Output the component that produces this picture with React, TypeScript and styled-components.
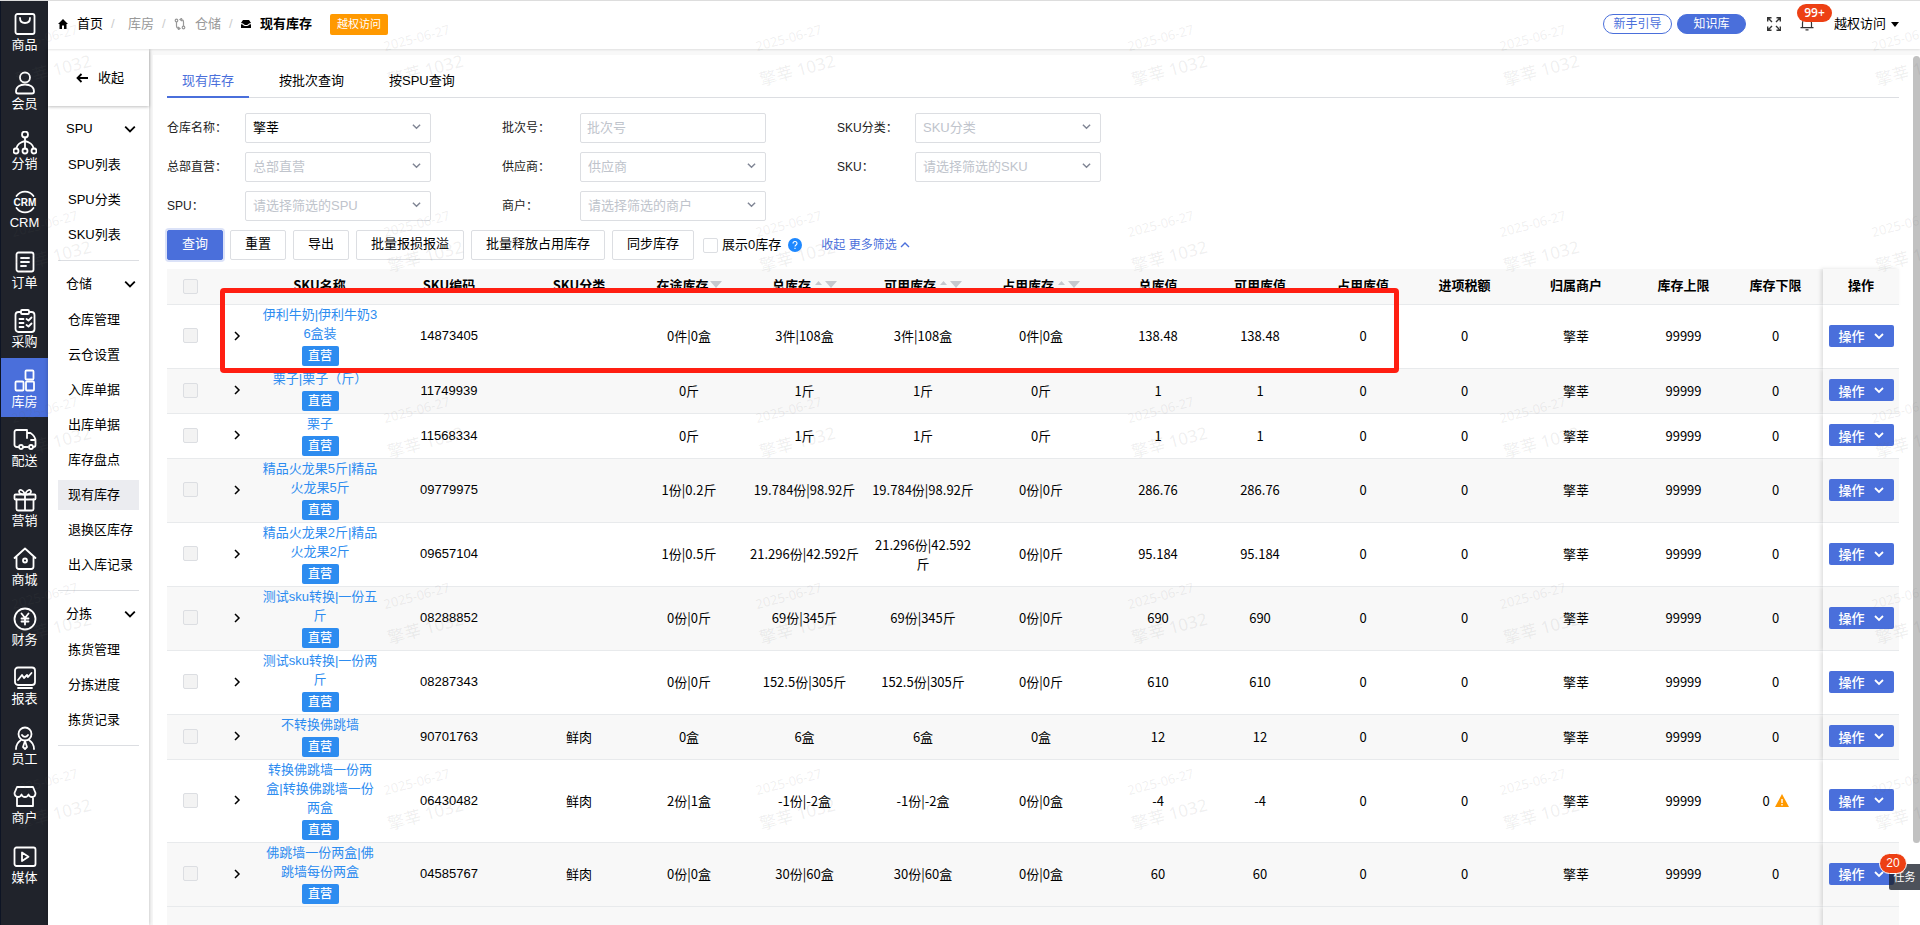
import React from 'react';
import styled, { createGlobalStyle, css } from 'styled-components';

const BLUE = '#4a6fdb';
const LINK = '#2d8cf0';
const LINE = '#dcdee2';
const SANS = '"Liberation Sans", "Noto Sans CJK SC", sans-serif';
const CJK = '"Noto Sans CJK SC", sans-serif';

const GlobalStyle = createGlobalStyle`
  * { box-sizing: border-box; }
  body {
    margin: 0;
    background: #f8f8f8;
    color: #000;
    font: 13px/20px ${SANS};
    overflow: hidden;
  }
  button, input, select { font: inherit; color: inherit; margin: 0; }
  a { text-decoration: none; color: inherit; }
  svg { display: block; flex: none; }
`;

/* ---------- shell ---------- */

const Shell = styled.div`
  position: relative;
  display: grid;
  grid-template-columns: 48px minmax(0, 1fr);
  height: 100vh;
  border-top: 1px solid #dddddd;
  overflow: hidden;
`;

const Rail = styled.nav`
  display: flex;
  flex-direction: column;
  padding-bottom: 32px;
  background: #20232b;
  border-left: 1px solid #0d1424;
`;

const RailLink = styled.a<{ $active?: boolean }>`
  flex: 1;
  display: flex;
  flex-direction: column;
  align-items: center;
  padding-top: 11px;
  color: #fff;
  line-height: 17px;
  background: ${(p) => (p.$active ? BLUE : 'transparent')};
`;

const Workspace = styled.div`
  display: flex;
  flex-direction: column;
  min-width: 0;
  min-height: 0;
`;

const Body = styled.div`
  flex: 1;
  display: flex;
  min-height: 0;
`;

/* ---------- top bar ---------- */

const TopBar = styled.header`
  position: relative;
  display: flex;
  align-items: center;
  justify-content: space-between;
  height: 48px;
  padding: 0 21px 2px 10px;
  background: #fff;
  box-shadow: 0 1px 2px rgba(0, 0, 0, 0.1);
`;

const Crumbs = styled.nav`
  display: flex;
  align-items: center;
`;

const Crumb = styled.a<{ $muted?: boolean; $current?: boolean }>`
  display: flex;
  align-items: center;
  gap: 9px;
  color: ${(p) => (p.$muted ? '#999' : '#000')};
  font-weight: ${(p) => (p.$current ? 700 : 400)};
`;

const Slash = styled.span`
  width: 20px;
  padding-left: 8px;
  color: #ccc;
`;

const Spacer = styled.span`
  width: 5px;
`;

const Tag = styled.span<{ $tone?: 'orange' }>`
  display: inline-block;
  height: ${(p) => (p.$tone ? 21 : 20)}px;
  padding: 0 7px;
  border-radius: 2px;
  background: ${(p) => (p.$tone ? '#ff9900' : LINK)};
  color: #fff;
  font-size: ${(p) => (p.$tone ? 11 : 12)}px;
  line-height: 20px;
`;

const CrumbTag = styled(Tag)`
  margin-left: 18px;
`;

const Tools = styled.div`
  display: flex;
  align-items: center;
`;

const Pill = styled.button<{ $filled?: boolean }>`
  width: 69px;
  height: 20px;
  margin-right: 5px;
  padding: 0;
  border: 1px solid ${BLUE};
  border-radius: 10px;
  background: ${(p) => (p.$filled ? BLUE : '#fff')};
  color: ${(p) => (p.$filled ? '#fff' : BLUE)};
  font-size: 12px;
  line-height: 18px;
`;

const IconButton = styled.button`
  position: relative;
  padding: 0;
  border: 0;
  background: none;
  margin-left: 16px;
`;

const Bell = styled(IconButton)`
  margin-left: 19px;
  margin-right: 20px;
`;

const badge = css`
  position: absolute;
  border-radius: 10px;
  background: #ed4014;
  color: #fff;
  text-align: center;
  font-size: 12px;
`;

const BellBadge = styled.span`
  ${badge}
  left: -3px;
  bottom: 9px;
  width: 35px;
  height: 18px;
  line-height: 18px;
  font-family: 'Open Sans', sans-serif;
  font-weight: 600;
`;

const UserButton = styled.button`
  display: flex;
  align-items: center;
  gap: 5px;
  padding: 0;
  border: 0;
  background: none;
`;

/* ---------- side menu ---------- */

const Side = styled.aside`
  width: 101px;
  background: #fff;
  box-shadow: 0 0 4px rgba(0, 0, 0, 0.25);
`;

const Collapse = styled.button`
  display: flex;
  align-items: center;
  justify-content: center;
  gap: 10px;
  width: 100%;
  height: 57px;
  padding: 0 0 0 3px;
  border: 0;
  background: #fff;
  box-shadow: 0 1px 3px rgba(0, 0, 0, 0.25);
`;

const Group = styled.section`
  margin: 0 10px;
  padding: 8px 0 10px;
  border-bottom: 1px solid ${LINE};
`;

const GroupHead = styled.button`
  display: flex;
  align-items: center;
  justify-content: space-between;
  width: 100%;
  height: 30px;
  margin-bottom: 6px;
  padding: 0 3px 0 8px;
  border: 0;
  background: none;
`;

const GroupList = styled.div`
  display: flex;
  flex-direction: column;
  gap: 5px;
`;

const SideLink = styled.a<{ $active?: boolean }>`
  height: 30px;
  padding-left: 10px;
  line-height: 30px;
  white-space: nowrap;
  background: ${(p) => (p.$active ? '#ebecf0' : 'transparent')};
`;

/* ---------- main panel ---------- */

const Panel = styled.main`
  flex: 1;
  min-width: 0;
  margin: 6px 0 0 4px;
  padding: 11px 21px 0 14px;
  background: #fff;
`;

const Tabs = styled.div`
  display: flex;
  gap: 15px;
  height: 32px;
  border-bottom: 1px solid ${LINE};
`;

const Tab = styled.button<{ $active?: boolean }>`
  height: 32px;
  padding: 0 15px;
  border: 0;
  border-bottom: 2px solid ${(p) => (p.$active ? BLUE : 'transparent')};
  background: none;
  color: ${(p) => (p.$active ? BLUE : '#000')};
`;

const Filters = styled.form`
  display: grid;
  grid-template-columns: repeat(3, 264px);
  gap: 9px 71px;
  margin-top: 15px;
`;

const Field = styled.label`
  display: grid;
  grid-template-columns: 78px 1fr;
  align-items: center;
  font-size: 12px;
  color: #222;
`;

const Control = styled.span`
  position: relative;
  display: block;
`;

const control = css`
  display: block;
  width: 100%;
  height: 30px;
  border: 1px solid ${LINE};
  border-radius: 2px;
  background: #fff;
  font-size: 13px;
  outline: none;
`;

const Select = styled.select<{ $filled?: boolean }>`
  ${control}
  appearance: none;
  padding: 0 28px 0 7px;
  color: ${(p) => (p.$filled ? '#000' : '#c0c4cc')};
`;

const TextInput = styled.input`
  ${control}
  padding: 0 6px 2px;
  &::placeholder { color: #c0c4cc; opacity: 1; }
`;

const SelectArrow = styled.span`
  position: absolute;
  right: 10px;
  top: 9px;
  color: #808695;
  pointer-events: none;
`;

const Actions = styled.div`
  display: flex;
  align-items: center;
  gap: 7px;
  margin: 9px 0;
`;

const Button = styled.button<{ $primary?: boolean }>`
  height: 30px;
  padding: 0 14px 2px;
  border: 1px solid ${(p) => (p.$primary ? BLUE : LINE)};
  border-radius: 2px;
  background: ${(p) => (p.$primary ? BLUE : '#fff')};
  color: ${(p) => (p.$primary ? '#fff' : '#000')};
  box-shadow: ${(p) => (p.$primary ? '0 0 0 2px rgba(74, 111, 219, 0.2)' : 'none')};
`;

const Check = styled.input`
  appearance: none;
  display: block;
  width: 15px;
  height: 15px;
  border: 1px solid ${LINE};
  border-radius: 2px;
  background: #fff;
  &:disabled { background: #f3f3f3; }
`;

const ZeroToggle = styled.label`
  display: flex;
  align-items: center;
  gap: 4px;
  margin-left: 2px;
`;

const MoreLink = styled.a`
  display: flex;
  align-items: center;
  gap: 3px;
  margin-left: 12px;
  color: ${BLUE};
  font-size: 12px;
`;

/* ---------- table ---------- */

const TableWrap = styled.div`
  position: relative;
`;

const Table = styled.table`
  width: 100%;
  table-layout: fixed;
  border-collapse: separate;
  border-spacing: 0;
  font-family: ${CJK};
  line-height: 19px;
  text-align: center;
`;

const HeadCell = styled.th<{ $fixed?: boolean; $check?: boolean }>`
  height: 36px;
  padding: 0 0 ${(p) => (p.$check ? 0 : 4)}px;
  border-bottom: 1px solid #e8eaec;
  background: #f8f8f8;
  font-weight: 700;
  white-space: nowrap;
  ${(p) => p.$fixed && 'box-shadow: -2px 0 4px rgba(0, 0, 0, 0.13);'}
`;

const HeadLabel = styled.span`
  display: inline-flex;
  align-items: center;
`;

const Row = styled.tr`
  background: #fff;
  &:nth-child(even) { background: #f8f8f8; }
`;

const Cell = styled.td<{ $fixed?: boolean }>`
  padding: 0 0 2px;
  border-bottom: 1px solid #e8eaec;
  word-break: break-all;
  ${(p) => p.$fixed && 'background: inherit; clip-path: inset(0 0 0 -6px); box-shadow: -2px 0 4px rgba(0, 0, 0, 0.13);'}
`;

const CodeCell = styled(Cell)`
  font-family: ${SANS};
`;

const NameCell = styled(Cell)`
  padding: 0 1px 2px 2px;
  font-family: ${SANS};
`;

const NameLink = styled.a`
  display: block;
  margin-bottom: 3px;
  color: ${LINK};
`;

const RowTag = styled(Tag)`
  display: block;
  width: 37px;
  margin: 0 auto;
  padding: 0;
  font-weight: 500;
  white-space: nowrap;
`;

const Centered = styled.span`
  display: flex;
  align-items: center;
  justify-content: center;
  gap: 5px;
`;

const Toggle = styled.button`
  display: block;
  margin: 0 auto;
  padding: 0;
  border: 0;
  background: none;
`;

const RowAction = styled.button`
  display: inline-flex;
  align-items: center;
  justify-content: center;
  gap: 9px;
  width: 65px;
  height: 22px;
  padding: 0;
  border: 0;
  border-radius: 2px;
  background: ${BLUE};
  color: #fff;
  font-weight: 500;
  vertical-align: middle;
`;

const FootCell = styled.td<{ $fixed?: boolean }>`
  height: 40px;
  background: #f8f8f8;
  ${(p) => p.$fixed && 'clip-path: inset(0 0 0 -6px); box-shadow: -2px 0 4px rgba(0, 0, 0, 0.13);'}
`;

/* ---------- overlays ---------- */

const Highlight = styled.div`
  position: absolute;
  top: 19px;
  left: 53px;
  right: 500px;
  height: 85px;
  border: 5px solid #ff1f12;
  border-radius: 4px;
  pointer-events: none;
`;

const ScrollThumb = styled.div`
  position: absolute;
  top: 55px;
  right: 0;
  bottom: 82px;
  width: 7px;
  border-radius: 4px;
  background: #c1c1c1;
`;

const TaskButton = styled.button`
  position: absolute;
  right: 0;
  bottom: 35px;
  width: 31px;
  height: 26px;
  padding: 0;
  border: 0;
  border-radius: 2px 0 0 2px;
  background: rgba(23, 28, 40, 0.77);
  color: #fff;
  font-size: 11px;
`;

const TaskBadge = styled.span`
  ${badge}
  left: -10px;
  top: -11px;
  width: 28px;
  height: 21px;
  border: 1px solid #fff;
  border-radius: 11px;
  line-height: 19px;
`;

const Marks = styled.div`
  position: absolute;
  inset: -1px 0 0 0;
  display: grid;
  grid-template-columns: repeat(6, 372px);
  grid-auto-rows: 186px;
  overflow: hidden;
  pointer-events: none;
`;

const Mark = styled.div`
  width: 90px;
  height: 66px;
  margin: 21px 0 0 4px;
  transform: rotate(-15deg);
  color: rgba(100, 100, 100, 0.1);
  font-family: 'Noto Sans', 'Noto Sans CJK SC', sans-serif;
  font-size: 17px;
  line-height: 33px;
  text-align: center;
  white-space: nowrap;
`;

const MarkDate = styled.div`
  font-size: 13px;
`;

/* ---------- icons ---------- */

type IconProps = { children: React.ReactNode };
const RailIcon = ({ children }: IconProps) => (
  <svg width="24" height="24" viewBox="0 0 24 24" fill="none" stroke="#fff" strokeWidth="1.8" strokeLinejoin="round" strokeLinecap="round">
    {children}
  </svg>
);

const Chevron = ({ size = 10, dir = 'down', weight = 1.6 }: { size?: number; dir?: 'down' | 'up' | 'right'; weight?: number }) => {
  const d = { down: 'M1 3l4 4 4-4', up: 'M1 7l4-4 4 4', right: 'M3 1l4 4-4 4' }[dir];
  return (
    <svg width={size} height={size} viewBox="0 0 10 10" fill="none" stroke="currentColor" strokeWidth={weight}>
      <path d={d} />
    </svg>
  );
};

const SortIcon = ({ both }: { both?: boolean }) => (
  <svg width={both ? 26 : 13} height="12" viewBox={both ? '0 0 26 12' : '13 0 13 12'} fill="#c5c8ce">
    {both && <path d="M4 6l3.5-4L11 6z" />}
    <path d="M14 2h12l-6 7z" />
  </svg>
);

const rail: { label: string; icon: React.ReactNode; active?: boolean }[] = [
  { label: '商品', icon: <><rect x="2.5" y="2" width="19" height="20" rx="2" /><path d="M7 6c0 3 2 5 5 5s5-2 5-5" /></> },
  { label: '会员', icon: <><circle cx="12" cy="6.5" r="5" /><path d="M3 20.5c0-4.500 4-7 9-7s9 2.500 9 7c0 1.500-.8 2-2 2H5c-1.200 0-2-.5-2-2z" /></> },
  { label: '分销', icon: <><circle cx="12" cy="3.500" r="3" /><circle cx="3" cy="20" r="2.500" /><circle cx="12" cy="20" r="2.500" /><circle cx="21" cy="20" r="2.500" /><path d="M12 6.500v11M3.500 17c.5-3 4-6 8.500-7 4.500 1 8 4 8.500 7" /></> },
  { label: 'CRM', icon: <><path d="M3.500 6a10.500 10.500 0 0 1 17 0M3.500 18a10.500 10.500 0 0 0 17 0" /><text x="12" y="15.700" textAnchor="middle" fill="#fff" stroke="none" fontSize="10" fontWeight="700" fontFamily="Liberation Sans">CRM</text></> },
  { label: '订单', icon: <><rect x="3.500" y="2.500" width="17" height="19" rx="2" /><path d="M8 8h8M8 12h8M8 16h5" /></> },
  { label: '采购', icon: <><rect x="2.500" y="3" width="19" height="20" rx="3" /><rect x="8" y="1" width="8" height="4" rx="1" fill="#20232b" /><path d="M6.500 10h4M6.500 14h4M6.500 18h4M13.500 10l2 1.500 3-3M13.500 16l2 1.500 3-3" /></> },
  { label: '库房', active: true, icon: <><rect x="12.500" y="1.500" width="8" height="9" rx="1" /><rect x="2.500" y="12.500" width="8" height="9" rx="1" /><rect x="13" y="12.500" width="8" height="9" rx="1" /></> },
  { label: '配送', icon: <><path d="M6 19H4c-1.500 0-2.500-1-2.500-2V4c0-1.500 1-2 2-2H14v3h3.500c3 2 5 5 5 8v4c0 1-1 2-2 2M10.500 19H15M14 5v5M18 12h4" /><circle cx="8" cy="19" r="2" /><circle cx="18" cy="19" r="2" /></> },
  { label: '营销', icon: <><rect x="1.500" y="6.500" width="21" height="5" rx="1" /><path d="M3.500 11.500V21c0 1 .5 1.500 1.500 1.500h14c1 0 1.500-.5 1.500-1.500v-9.500M12 6.500v16M12 6.500c-2 0-6-.5-6-3s4-2.500 6 3c2-5.500 6-5.500 6-3s-4 3-6 3z" /></> },
  { label: '商城', icon: <><path d="M1.500 11L12 1.500 22.500 11M3.500 10v9.500c0 1.500 1 2.500 2.500 2.500h12c1.500 0 2.500-1 2.500-2.500V10" /><circle cx="12" cy="13.500" r="2" /></> },
  { label: '财务', icon: <><circle cx="12" cy="12" r="10.500" /><path d="M8.500 6.500L12 11l3.500-4.500M12 11v6.500M8.500 11.500h7M8.500 14.500h7" /></> },
  { label: '报表', icon: <><rect x="2" y="1.500" width="20" height="17.500" rx="3" /><path d="M5 14l4-5 2 3 3-3 1 2 3.500-4M5 22h14" /></> },
  { label: '员工', icon: <><circle cx="12" cy="8" r="6.500" /><path d="M9 9c1.500 2.500 4.500 2.500 6 0M3 23c0-4 2-7 5-9M21 23c0-4-2-7-5-9M12 15l-2 6 2 2 2-2z" /></> },
  { label: '商户', icon: <><path d="M4 2h16l2.500 6c0 2.500-1.500 4-3.500 4s-3-1-3.500-2.500C15 11 14 12 12 12s-3-1-3.500-2.500C8 11 7 12 5 12s-3.500-1.500-3.500-4zM4 12.500V21h16v-8.500" /></> },
  { label: '媒体', icon: <><rect x="1.500" y="2.500" width="21" height="18.500" rx="2" /><path d="M9 7.500v8.500l6.500-4.200z" /></> },
];

const groups = [
  { title: 'SPU', items: ['SPU列表', 'SPU分类', 'SKU列表'] },
  { title: '仓储', items: ['仓库管理', '云仓设置', '入库单据', '出库单据', '库存盘点', '现有库存', '退换区库存', '出入库记录'] },
  { title: '分拣', items: ['拣货管理', '分拣进度', '拣货记录'] },
];

const filters: { label: string; text: string; kind?: 'input' | 'filled' }[] = [
  { label: '仓库名称', text: '擎莘', kind: 'filled' },
  { label: '批次号', text: '批次号', kind: 'input' },
  { label: 'SKU分类', text: 'SKU分类' },
  { label: '总部直营', text: '总部直营' },
  { label: '供应商', text: '供应商' },
  { label: 'SKU', text: '请选择筛选的SKU' },
  { label: 'SPU', text: '请选择筛选的SPU' },
  { label: '商户', text: '请选择筛选的商户' },
];

const columns: { title: string; width: number; sort?: 'down' | 'both' }[] = [
  { title: 'SKU名称', width: 119 },
  { title: 'SKU编码', width: 140 },
  { title: 'SKU分类', width: 120 },
  { title: '在途库存', width: 100, sort: 'down' },
  { title: '总库存', width: 131, sort: 'both' },
  { title: '可用库存', width: 106, sort: 'both' },
  { title: '占用库存', width: 130, sort: 'both' },
  { title: '总库值', width: 104 },
  { title: '可用库值', width: 100 },
  { title: '占用库值', width: 106 },
  { title: '进项税额', width: 97 },
  { title: '归属商户', width: 126 },
  { title: '库存上限', width: 89 },
  { title: '库存下限', width: 95 },
];

// name, code, category, in transit, total, available, occupied, total value, low-stock warning
type Stock = [string, string, string, string, string, string, string, string, boolean?];
const stock: Stock[] = [
  ['伊利牛奶|伊利牛奶36盒装', '14873405', '', '0件|0盒', '3件|108盒', '3件|108盒', '0件|0盒', '138.48'],
  ['栗子|栗子（斤）', '11749939', '', '0斤', '1斤', '1斤', '0斤', '1'],
  ['栗子', '11568334', '', '0斤', '1斤', '1斤', '0斤', '1'],
  ['精品火龙果5斤|精品火龙果5斤', '09779975', '', '1份|0.2斤', '19.784份|98.92斤', '19.784份|98.92斤', '0份|0斤', '286.76'],
  ['精品火龙果2斤|精品火龙果2斤', '09657104', '', '1份|0.5斤', '21.296份|42.592斤', '21.296份|42.592斤', '0份|0斤', '95.184'],
  ['测试sku转换|一份五斤', '08288852', '', '0份|0斤', '69份|345斤', '69份|345斤', '0份|0斤', '690'],
  ['测试sku转换|一份两斤', '08287343', '', '0份|0斤', '152.5份|305斤', '152.5份|305斤', '0份|0斤', '610'],
  ['不转换佛跳墙', '90701763', '鲜肉', '0盒', '6盒', '6盒', '0盒', '12'],
  ['转换佛跳墙一份两盒|转换佛跳墙一份两盒', '06430482', '鲜肉', '2份|1盒', '-1份|-2盒', '-1份|-2盒', '0份|0盒', '-4', true],
  ['佛跳墙一份两盒|佛跳墙每份两盒', '04585767', '鲜肉', '0份|0盒', '30份|60盒', '30份|60盒', '0份|0盒', '60'],
];

const StockRow = ({ item }: { item: Stock }) => {
  const [name, code, category, transit, total, available, occupied, value, warn] = item;
  return (
    <Row>
      <Cell><Centered><Check type="checkbox" disabled aria-label={name} /></Centered></Cell>
      <Cell><Toggle aria-label="展开"><Chevron dir="right" weight={1.5} /></Toggle></Cell>
      <NameCell>
        <NameLink href="#">{name}</NameLink>
        <RowTag>直营</RowTag>
      </NameCell>
      <CodeCell>{code}</CodeCell>
      <Cell>{category}</Cell>
      <Cell>{transit}</Cell>
      <Cell>{total}</Cell>
      <Cell>{available}</Cell>
      <Cell>{occupied}</Cell>
      <Cell>{value}</Cell>
      <Cell>{value}</Cell>
      <Cell>0</Cell>
      <Cell>0</Cell>
      <Cell>擎莘</Cell>
      <Cell>99999</Cell>
      <Cell>
        <Centered>
          0
          {warn && (
            <svg width="14" height="13" viewBox="0 0 14 13">
              <path d="M7 0l7 13H0z" fill="#ff9900" />
              <path d="M7 5v4M7 10v1.500" stroke="#fff" strokeWidth="1.400" />
            </svg>
          )}
        </Centered>
      </Cell>
      <Cell $fixed><RowAction>操作<Chevron weight={1.8} /></RowAction></Cell>
    </Row>
  );
};

export default function App() {
  return (
    <>
      <GlobalStyle />
      <Shell>
        <Rail>
          {rail.map((r) => (
            <RailLink key={r.label} href="#" $active={r.active}>
              <RailIcon>{r.icon}</RailIcon>
              {r.label}
            </RailLink>
          ))}
        </Rail>
        <Workspace>
          <TopBar>
            <Crumbs>
              <Crumb href="#">
                <svg width="10" height="10" viewBox="0 0 10 10"><path d="M5 0L0 5h1.500v5h2.500V6.500h2V10h2.500V5H10z" /></svg>
                首页
              </Crumb>
              <Slash>/</Slash>
              <Spacer />
              <Crumb href="#" $muted>库房</Crumb>
              <Slash>/</Slash>
              <Crumb href="#" $muted>
                <svg width="12" height="12" viewBox="0 0 12 12" fill="none" stroke="#999" strokeWidth="1.200">
                  <circle cx="2.500" cy="2.500" r="1.300" /><path d="M2.500 4v4c0 2 1 2.500 3 2.500M4 9l2 1.500L4 12" />
                  <circle cx="9.500" cy="9.500" r="1.300" /><path d="M9.500 8V4c0-2-1-2.500-3-2.500M8 0L6 1.500 8 3" />
                </svg>
                仓储
              </Crumb>
              <Slash>/</Slash>
              <Crumb href="#" $current>
                <svg width="10" height="8" viewBox="0 0 10 8"><path d="M2 0h6l2 3-2 .5C7 5 6 5 5 5S3 5 2 3.500L0 3z" /><path d="M0 4.200l1.500.3C2.500 6 3.500 6 5 6s2.500 0 3.500-1.500L10 4.200V8H0z" /></svg>
                现有库存
              </Crumb>
              <CrumbTag $tone="orange">越权访问</CrumbTag>
            </Crumbs>
            <Tools>
              <Pill>新手引导</Pill>
              <Pill $filled>知识库</Pill>
              <IconButton aria-label="全屏">
                <svg width="14" height="14" viewBox="0 0 14 14" fill="none" stroke="#333" strokeWidth="1.400">
                  <path d="M.7 4.500V.7h3.800M1 1l4 4M9.500.7h3.800v3.800M13 1L9 5M.7 9.500v3.800h3.800M1 13l4-4M9.500 13.300h3.800V9.500M13 13L9 9" />
                </svg>
              </IconButton>
              <Bell aria-label="消息">
                <svg width="14" height="14" viewBox="0 0 14 14" fill="none" stroke="#333" strokeWidth="1.200">
                  <path d="M2.500 10.500V6a4.500 4.500 0 0 1 9 0v4.500M.5 10.600h13M5.500 12.800h3" />
                </svg>
                <BellBadge>99+</BellBadge>
              </Bell>
              <UserButton>
                越权访问
                <svg width="8" height="5" viewBox="0 0 8 5"><path d="M0 0h8L4 5z" /></svg>
              </UserButton>
            </Tools>
          </TopBar>
          <Body>
            <Side>
              <Collapse>
                <svg width="12" height="10" viewBox="0 0 12 10" fill="none" stroke="#000" strokeWidth="1.800"><path d="M12 5H1.500M5.500 1l-4 4 4 4" /></svg>
                收起
              </Collapse>
              {groups.map((g) => (
                <Group key={g.title}>
                  <GroupHead>{g.title}<Chevron size={12} weight={1.5} /></GroupHead>
                  <GroupList>
                    {g.items.map((t) => (
                      <SideLink key={t} href="#" $active={t === '现有库存'}>{t}</SideLink>
                    ))}
                  </GroupList>
                </Group>
              ))}
            </Side>
            <Panel>
              <Tabs role="tablist">
                <Tab role="tab" aria-selected $active>现有库存</Tab>
                <Tab role="tab">按批次查询</Tab>
                <Tab role="tab">按SPU查询</Tab>
              </Tabs>
              <Filters>
                {filters.map((f) => (
                  <Field key={f.label}>
                    {f.label}：
                    <Control>
                      {f.kind === 'input' ? (
                        <TextInput placeholder={f.text} />
                      ) : (
                        <>
                          <Select $filled={f.kind === 'filled'}><option>{f.text}</option></Select>
                          <SelectArrow><Chevron size={9} /></SelectArrow>
                        </>
                      )}
                    </Control>
                  </Field>
                ))}
              </Filters>
              <Actions>
                <Button $primary>查询</Button>
                <Button>重置</Button>
                <Button>导出</Button>
                <Button>批量报损报溢</Button>
                <Button>批量释放占用库存</Button>
                <Button>同步库存</Button>
                <ZeroToggle><Check type="checkbox" />展示0库存</ZeroToggle>
                <svg width="14" height="14" viewBox="0 0 14 14">
                  <circle cx="7" cy="7" r="7" fill="#1e88ff" />
                  <path d="M5 5.500c0-2.600 4-2.600 4 0C9 7 7 7 7 8.500M7 9.800V11" fill="none" stroke="#fff" strokeWidth="1.100" />
                </svg>
                <MoreLink href="#">收起 更多筛选<Chevron dir="up" weight={1.4} /></MoreLink>
              </Actions>
              <TableWrap>
                <Table>
                  <colgroup>
                    <col width={47} />
                    <col width={46} />
                    {columns.map((c) => <col key={c.title} width={c.width} />)}
                    <col width={76} />
                  </colgroup>
                  <thead>
                    <tr>
                      <HeadCell $check><Centered><Check type="checkbox" disabled aria-label="全选" /></Centered></HeadCell>
                      <HeadCell />
                      {columns.map((c) => (
                        <HeadCell key={c.title}>
                          <HeadLabel>{c.title}{c.sort && <SortIcon both={c.sort === 'both'} />}</HeadLabel>
                        </HeadCell>
                      ))}
                      <HeadCell $fixed>操作</HeadCell>
                    </tr>
                  </thead>
                  <tbody>
                    {stock.map((s) => <StockRow key={s[1]} item={s} />)}
                  </tbody>
                  <tfoot>
                    <tr><FootCell colSpan={16} /><FootCell $fixed /></tr>
                  </tfoot>
                </Table>
                <Highlight />
              </TableWrap>
            </Panel>
          </Body>
        </Workspace>
        <ScrollThumb />
        <TaskButton>任务<TaskBadge>20</TaskBadge></TaskButton>
        <Marks aria-hidden="true">
          {Array.from({ length: 30 }, (_, i) => (
            <Mark key={i}><MarkDate>2025-06-27</MarkDate>擎莘 1032</Mark>
          ))}
        </Marks>
      </Shell>
    </>
  );
}
